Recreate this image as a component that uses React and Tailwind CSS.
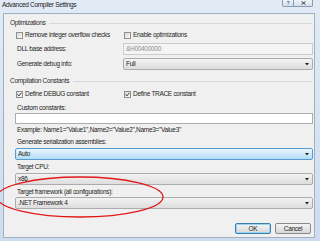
import React from 'react';

function Check({ checked }) {
  return (
    <span className="w-[7px] h-[7px] shrink-0 border border-[#8e8f8f] bg-linear-to-br from-[#d8d8d8] to-[#fbfbfb] flex items-center justify-center">
      {checked && (
        <svg width="5" height="5" viewBox="0 0 5 5">
          <path d="M0.6 2.4 L1.9 3.9 L4.4 0.8" fill="none" stroke="#2a3a55" strokeWidth="1" />
        </svg>
      )}
    </span>
  );
}

function Combo({ value, hot }) {
  return (
    <div
      className={`h-[12px] flex-1 flex items-center rounded-[2px] border pl-[2px] pr-[3px] ${
        hot
          ? 'border-[#5a9bcf] bg-linear-to-b from-[#eaf6fd] to-[#b3def7]'
          : 'border-[#acacac] bg-linear-to-b from-[#f3f3f3] to-[#dddddd]'
      }`}
    >
      <span className="flex-1 leading-[10px]">{value}</span>
      <svg width="4" height="3" viewBox="0 0 4 3">
        <path d="M0 0 H4 L2 2.5 Z" fill="#222" />
      </svg>
    </div>
  );
}

function Group({ title, className }) {
  return (
    <div className={`h-[10px] flex items-center ml-[6px] mr-[2px] ${className}`}>
      <span className="leading-[10px] text-[#2b2b2b]">{title}</span>
      <div className="flex-1 h-px bg-[#d5d9de] ml-[4px]" />
    </div>
  );
}

function Label({ children, className }) {
  return <div className={`h-[10px] leading-[10px] ml-[13px] ${className}`}>{children}</div>;
}

export default function App() {
  return (
    <div className="w-[320px] h-[241px] relative overflow-hidden bg-linear-to-b from-[#e2ebf5] to-[#cddcee] font-['Liberation_Sans',Arial,sans-serif] text-[6.5px] tracking-[-0.3px] text-[#262626]">
      {/* Title bar */}
      <div className="h-[13px] flex items-start">
        <span className="ml-[2px] mt-[1px] leading-[8px] text-[#222]">Advanced Compiler Settings</span>
        <div className="flex-1" />
        <div className="flex mr-[7px]">
          <div className="w-[12px] h-[7px] border border-t-0 border-[#8a9ab0] rounded-bl-[2px] bg-linear-to-b from-[#eef3f9] to-[#d6e1ee] flex items-center justify-center text-[5px] leading-[5px] text-[#333]">
            ?
          </div>
          <div className="w-[19px] h-[7px] border border-t-0 border-l-0 border-[#8a9ab0] rounded-br-[2px] bg-linear-to-b from-[#eef3f9] to-[#d6e1ee] flex items-center justify-center">
            <svg width="5" height="4" viewBox="0 0 5 4">
              <path d="M0.5 0.5 L4.5 3.5 M4.5 0.5 L0.5 3.5" stroke="#333" strokeWidth="0.9" />
            </svg>
          </div>
        </div>
      </div>

      {/* Client area */}
      <div className="ml-[3px] w-[312px] h-[225px] border border-[#9fb0c4] bg-[#f0f0f0] flex flex-col">
        <Group title="Optimizations" className="mt-[4px]" />

        <div className="h-[8px] mt-[3px] flex items-center">
          <div className="w-[108px] flex items-center ml-[12px] gap-[2px]">
            <Check />
            <span className="leading-[8px]">Remove integer overflow checks</span>
          </div>
          <div className="flex items-center gap-[2px]">
            <Check />
            <span className="leading-[8px]">Enable optimizations</span>
          </div>
        </div>

        <div className="h-[12px] mt-[4px] flex items-center mr-[1px]">
          <div className="w-[106px] ml-[13px] leading-[10px]">DLL base address:</div>
          <div className="flex-1 h-[12px] border border-[#c9ccd1] bg-[#f4f4f4] pl-[2px] leading-[10px] text-[#8d8d8d]">
            &amp;H00400000
          </div>
        </div>

        <div className="h-[12px] mt-[3px] flex items-center mr-[1px]">
          <div className="w-[106px] ml-[13px] leading-[10px]">Generate debug info:</div>
          <Combo value="Full" />
        </div>

        <Group title="Compilation Constants" className="mt-[6px]" />

        <div className="h-[8px] mt-[4px] flex items-center">
          <div className="w-[108px] flex items-center ml-[12px] gap-[2px]">
            <Check checked />
            <span className="leading-[8px]">Define DEBUG constant</span>
          </div>
          <div className="flex items-center gap-[2px]">
            <Check checked />
            <span className="leading-[8px]">Define TRACE constant</span>
          </div>
        </div>

        <Label className="mt-[5px]">Custom constants:</Label>
        <div className="h-[11px] ml-[11px] mr-[1px] border border-[#abadb3] bg-white" />

        <Label className="mt-[1px]">Example: Name1="Value1",Name2="Value2",Name3="Value3"</Label>

        <Label className="mt-[2px]">Generate serialization assemblies:</Label>
        <div className="flex ml-[11px] mr-[1px] mt-[1px]">
          <Combo value="Auto" hot />
        </div>

        <Label className="mt-[2px]">Target CPU:</Label>
        <div className="flex ml-[11px] mr-[1px] mt-[1px]">
          <Combo value="x86" />
        </div>

        <Label className="mt-[2px]">Target framework (all configurations):</Label>
        <div className="flex ml-[11px] mr-[1px]">
          <Combo value=".NET Framework 4" />
        </div>

        <div className="flex justify-end gap-[4px] mt-[14px] mr-[3px]">
          <button className="w-[36px] h-[11px] rounded-[2px] border border-[#3c7fb1] bg-linear-to-b from-[#f4f4f4] to-[#d8d8d8] shadow-[inset_0_0_0_1px_#9ad4f3] leading-[9px] text-[6.5px]">
            OK
          </button>
          <button className="w-[36px] h-[11px] rounded-[2px] border border-[#8a8a8a] bg-linear-to-b from-[#f4f4f4] to-[#d8d8d8] leading-[9px] text-[6.5px]">
            Cancel
          </button>
        </div>
      </div>

      {/* Red annotation ellipse */}
      <svg className="absolute left-0 top-0 pointer-events-none" width="320" height="241">
        <ellipse cx="80" cy="197" rx="83" ry="20" fill="none" stroke="#e01818" strokeWidth="1.3" />
      </svg>
    </div>
  );
}
